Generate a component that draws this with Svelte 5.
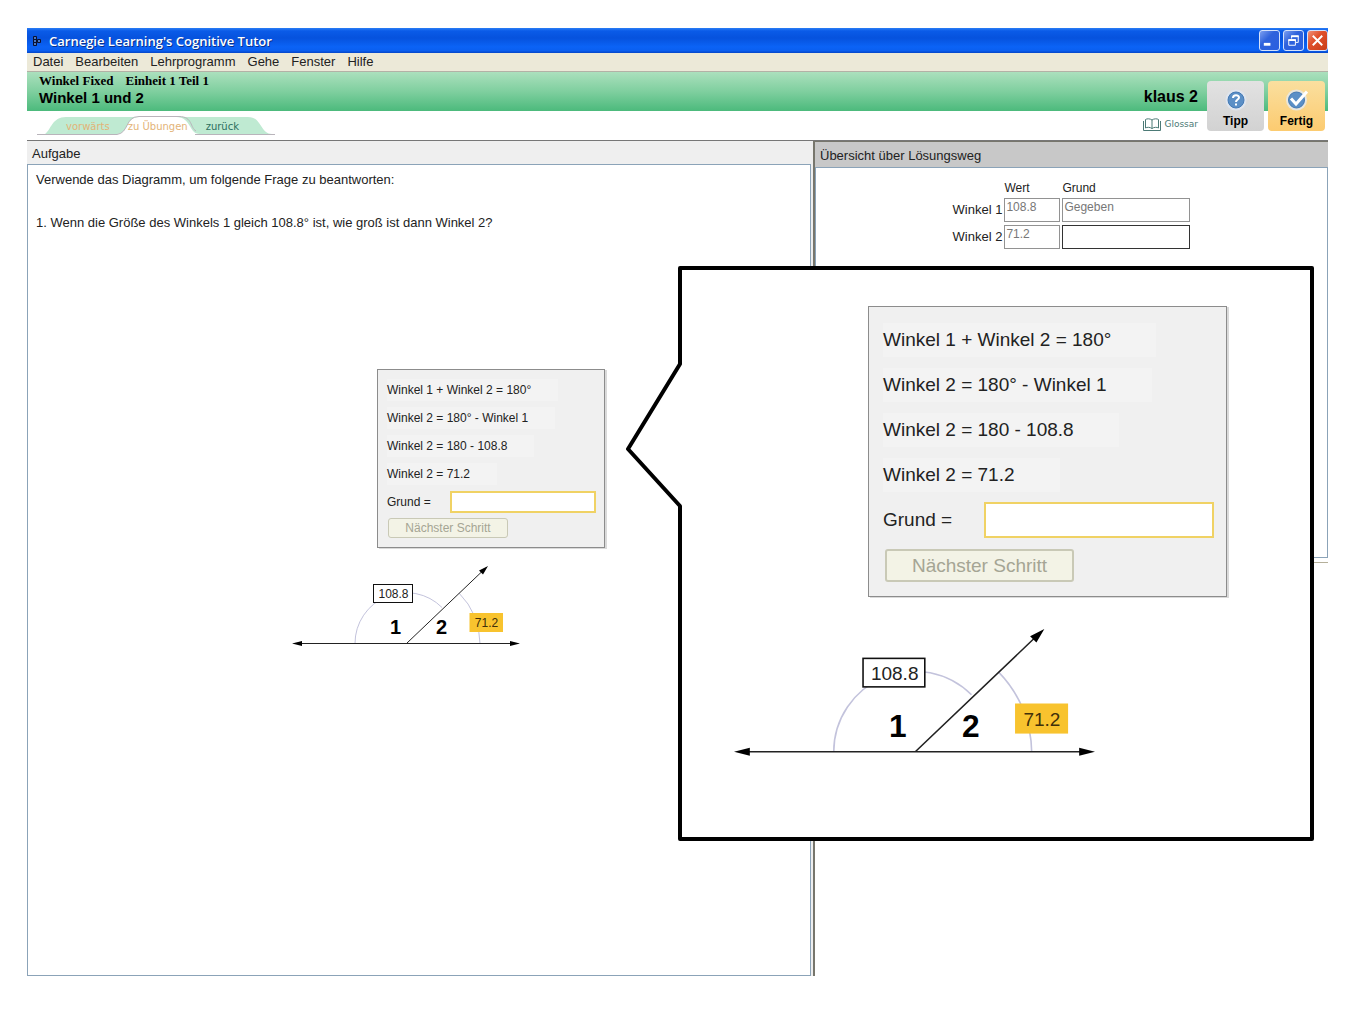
<script>
  const menus = ['Datei', 'Bearbeiten', 'Lehrprogramm', 'Gehe', 'Fenster', 'Hilfe'];
  const equations = [
    'Winkel 1 + Winkel 2 = 180°',
    'Winkel 2 = 180° - Winkel 1',
    'Winkel 2 = 180 - 108.8',
    'Winkel 2 = 71.2'
  ];
  const rows = [
    { name: 'Winkel 1', wert: '108.8', grund: 'Gegeben', open: false },
    { name: 'Winkel 2', wert: '71.2', grund: '', open: true }
  ];
</script>

{#snippet work(id)}
  <form class="steps">
    {#each equations as line}
      <p class="row"><span class="eq">{line}</span></p>
    {/each}
    <div class="row reason">
      <label for={id}>Grund =</label>
      <input {id} type="text" autocomplete="off" />
    </div>
    <button class="next" type="button" disabled>Nächster Schritt</button>
  </form>
  <svg class="diagram" viewBox="0 0 228 82" role="img" aria-label="Winkel 1 und Winkel 2">
    <g fill="none" stroke="#c3c3dc" stroke-width="1">
      <path d="M63 77.5A51 51 0 0 1 150 41.500" />
      <path d="M167 27A73.500 73.500 0 0 1 188 77.5" />
    </g>
    <path d="M8 77.5H220M114.500 77.5L190 5.500" stroke="#222" stroke-width="1" fill="none" />
    <path d="M0 77.500L10 75V80ZM228 77.500L218 75V80ZM196 0L191 8.500L187 4.500Z" fill="#000" />
    <rect x="81.500" y="18.500" width="39" height="18" fill="#fff" stroke="#111" stroke-width="1" />
    <rect x="177.500" y="47" width="33.500" height="19" fill="#f8c32e" />
    <g text-anchor="middle" font-size="12">
      <text x="101.500" y="32" fill="#222">108.8</text>
      <text x="194.500" y="61" fill="#40300a">71.2</text>
    </g>
    <g text-anchor="middle" font-size="20" font-weight="700">
      <text x="103.500" y="68">1</text>
      <text x="149.500" y="68">2</text>
    </g>
  </svg>
{/snippet}

<main class="window">
  <header class="titlebar">
    <svg class="logo" viewBox="0 0 10 12" aria-hidden="true">
      <path d="M1.500 1.500h3v3h-3zM1.500 4.500h3v3h-3zM1.500 7.500h3v3h-3zM5.500 4.500h3v3h-3z" fill="#4a78c0" stroke="#0a1030" />
    </svg>
    <h1>Carnegie Learning's Cognitive Tutor</h1>
    <div class="controls">
      <button type="button" aria-label="Minimieren">
        <svg viewBox="0 0 20 20"><path d="M4 14h7" stroke="#fff" stroke-width="3" /></svg>
      </button>
      <button type="button" aria-label="Wiederherstellen">
        <svg viewBox="0 0 20 20" fill="none" stroke="#fff">
          <path d="M8 8V5.500h7v6.500h-2.500" /><path d="M7.500 5.500H15.500" stroke-width="2" />
          <path d="M5 9.500h7v5.500h-7z" /><path d="M4.500 9.500h8" stroke-width="2" />
        </svg>
      </button>
      <button class="close" type="button" aria-label="Schließen">
        <svg viewBox="0 0 20 20"><path d="M5 5l10 10M15 5L5 15" stroke="#fff" stroke-width="2" /></svg>
      </button>
    </div>
  </header>

  <nav class="menubar" aria-label="Menü">
    {#each menus as m}<button type="button">{m}</button>{/each}
  </nav>

  <section class="banner">
    <div class="lesson">
      <p class="unit"><span>Winkel Fixed</span><span>Einheit 1 Teil 1</span></p>
      <h2>Winkel 1 und 2</h2>
      <nav class="tabs" aria-label="Navigation">
        <svg class="tabshape" viewBox="0 0 238 20" aria-hidden="true">
          <path d="M8 19C14 15 15 2 29 2H211C225 2 223 19 235 19Z" fill="#bfead2" />
          <path d="M80 19C92 18 88 2 102 2H139C155 2 151 19 163 19Z" fill="#fff" />
          <path d="M0 19.500H80C92 18 88 1.500 102 1.500H142C156 1.500 153 13 159 16" fill="none" stroke="#b9b4bb" />
          <path d="M158 19.500H238" fill="none" stroke="#b9b4bb" />
        </svg>
        <button class="dim first" type="button">vorwärts</button>
        <button class="dim second" type="button">zu Übungen</button>
        <button class="third" type="button">zurück</button>
      </nav>
    </div>
    <div class="user">
      <strong>klaus 2</strong>
      <a href="#glossar">
        <svg viewBox="0 0 18 13" fill="none" stroke="#4c7a76" aria-hidden="true">
          <path d="M9 2C7 .500 4 .500 2.500 1.500V10C4 9 7 9 9 10.500C11 9 14 9 15.500 10V1.500C14 .500 11 .500 9 2V10.500" />
          <path d="M.500 3V12.500H17.500V3" />
        </svg>
        Glossar
      </a>
    </div>
    <div class="actions">
      <button type="button">
        <svg viewBox="0 0 22 22" aria-hidden="true">
          <circle cx="11" cy="11" r="10.500" fill="#dfe5ee" />
          <circle cx="11" cy="11" r="8" fill="#5b8fc6" stroke="#447ab5" />
          <path d="M8 9C8 5.500 14 5.500 14 8.500C14 10.500 11 10.500 11 13M11 14.500V16.500" fill="none" stroke="#fff" stroke-width="2" />
        </svg>
        Tipp
      </button>
      <button class="done" type="button">
        <svg viewBox="0 0 22 22" aria-hidden="true">
          <circle cx="10.500" cy="11" r="10.500" fill="#e9e6dc" />
          <circle cx="10.500" cy="11" r="8" fill="#5b8fc6" stroke="#447ab5" />
          <path d="M5 9.500L10 15L21 2.500" fill="none" stroke="#fff" stroke-width="3" />
        </svg>
        Fertig
      </button>
    </div>
  </section>

  <div class="panes">
    <section class="task">
      <h3>Aufgabe</h3>
      <div class="body">
        <p class="question">Verwende das Diagramm, um folgende Frage zu beantworten:</p>
        <p class="question">1. Wenn die Größe des Winkels 1 gleich 108.8° ist, wie groß ist dann Winkel 2?</p>
        <div class="work">{@render work('grund')}</div>
      </div>
    </section>
    <div class="overview">
      <section>
        <h3>Übersicht über Lösungsweg</h3>
        <div class="body">
          <table>
            <thead><tr><td></td><th scope="col">Wert</th><th scope="col">Grund</th></tr></thead>
            <tbody>
              {#each rows as r}
                <tr>
                  <th scope="row">{r.name}</th>
                  <td><input class="wert" type="text" value={r.wert} aria-label="{r.name} Wert" readonly /></td>
                  <td><input class="grund" class:open={r.open} type="text" value={r.grund} aria-label="{r.name} Grund" readonly={!r.open} /></td>
                </tr>
              {/each}
            </tbody>
          </table>
        </div>
      </section>
    </div>
  </div>

  <aside class="callout" aria-label="Vergrößerung">
    <svg class="frame" viewBox="0 0 690 576" aria-hidden="true">
      <path d="M55 2H687V573H55V240L3 183L55 98Z" fill="#fff" stroke="#000" stroke-width="4" stroke-linejoin="round" />
    </svg>
    <div class="work large">{@render work('grund-gross')}</div>
  </aside>
</main>

<style>
  :global(body) { margin: 0; background: #fff; }
  * { box-sizing: border-box; }
  h1, h2, h3, p { margin: 0; font-weight: 400; }
  button { font: inherit; color: inherit; padding: 0; border: 0; background: none; }
  svg { display: block; }
  .window {
    position: relative;
    display: flex;
    flex-direction: column;
    min-height: calc(100vh - 70px);
    margin: 28px 28px 42px 27px;
    font: 13px/18px "Liberation Sans", Arial, sans-serif;
    color: #222;
  }

  .titlebar {
    display: flex;
    align-items: center;
    height: 25px;
    padding: 0 0 0 5px;
    background: linear-gradient(#2a7df5 0, #0a5be8 12%, #0652dd 40%, #0b63f6 75%, #0a5ff0 90%, #0546c8);
    color: #fff;
  }
  .logo { width: 10px; height: 12px; margin-right: 7px; }
  .titlebar h1 { flex: 1; font: 600 13px/18px "Open Sans", "Noto Sans", sans-serif; text-shadow: 1px 1px #0a318c; }
  .controls { display: flex; gap: 3px; }
  .controls button {
    width: 21px;
    height: 21px;
    border: 1px solid #d5e2fb;
    border-radius: 3px;
    background: linear-gradient(135deg, #7c9ff0, #2f62dc 40%, #2a5fe0);
  }
  .controls .close { background: linear-gradient(135deg, #f0927a, #e0502c 40%, #c83c18); }

  .menubar { display: flex; gap: 12px; height: 19px; padding: 0 6px; background: #ece9d8; border-bottom: 1px solid #b3b1a6; }

  .banner {
    display: flex;
    height: 68px;
    padding-right: 3px;
    background: linear-gradient(#abe0bd, #7fcf9f 50%, #4cba7c) top / 100% 39px no-repeat;
  }
  .lesson { flex: 1; color: #000; }
  .unit { display: flex; gap: 12px; padding-left: 12px; font: 700 13px/17px "Liberation Serif", "Times New Roman", serif; }
  .banner h2 { padding-left: 12px; font-size: 15px; font-weight: 700; }
  .tabs { position: relative; display: flex; align-items: center; width: 238px; height: 20px; margin: 8px 0 0 10px; font: 10px/12px "DejaVu Sans", sans-serif; color: #2c6f5e; }
  .tabs button { position: relative; padding-top: 4px; }
  .tabshape { position: absolute; inset: 0; width: 238px; height: 20px; }
  .dim { color: #e3b377; }
  .first { margin-left: 29px; }
  .second { margin-left: 18px; }
  .third { margin-left: 18px; }
  .user { display: flex; flex-direction: column; align-items: flex-end; gap: 11px; padding: 16px 9px 0 0; color: #000; }
  .user strong { font-size: 16px; }
  .user a { display: flex; align-items: center; gap: 3px; font: 9px/14px "DejaVu Sans", sans-serif; color: #4c7a76; text-decoration: none; }
  .user a svg { width: 18px; height: 13px; }
  .actions { display: flex; gap: 4px; padding-top: 9px; }
  .actions button {
    display: flex;
    flex-direction: column;
    align-items: center;
    gap: 1px;
    width: 57px;
    height: 50px;
    padding-top: 8px;
    border-radius: 4px;
    background: linear-gradient(#e2e2e2, #d2d2d2);
    color: #000;
    font-size: 12px;
    font-weight: 700;
  }
  .actions .done { background: linear-gradient(#fadf9f, #fccb70); }
  .actions svg { width: 22px; height: 22px; }

  .panes { display: flex; flex: 1; border-top: 1px solid #777; }
  .task { display: flex; flex: 784; flex-direction: column; min-width: 0; }
  h3 { padding: 4px 5px 2px; background: #efefef; font-size: 13px; line-height: 17px; }
  .body { flex: 1; border: 1px solid #8ba3b8; }
  .task .body { display: flex; flex-direction: column; padding: 6px 8px; }
  .question { min-height: 43px; }
  .overview { flex: 513; min-width: 0; border-left: 2px solid #77766c; box-shadow: -2px 0 #eee; margin-left: 2px; }
  .overview section { display: flex; flex-direction: column; height: calc(50% + 4px); min-height: 200px; border-bottom: 1px solid #b5b09a; padding-bottom: 4px; }
  .overview h3 { padding: 5px 5px 3px; border-top: 1px solid #77766c; background: #c8c8c8; }

  table { margin: 10px auto 0; border-spacing: 2px 3px; font-size: 12px; line-height: 14px; }
  td, th { padding: 0; font-weight: 400; text-align: left; }
  tbody th { font-size: 13px; }
  td input { display: block; height: 24px; padding: 0 0 6px 1px; border: 1px solid #929292; color: #777; font: 12px/16px "Liberation Sans", Arial, sans-serif; }
  .wert { width: 56px; }
  .grund { width: 128px; }
  .open { border-color: #333; }

  .work { display: flex; flex-direction: column; width: 312px; margin: 112px 0 0 256px; font-size: 12px; }
  .steps { width: 228px; height: 179px; margin-left: 85px; padding: 6px 8px 0 9px; border: 1px solid #8c8c8c; background: #f0f0f0; box-shadow: 2px 1px #dadada; }
  .row { display: flex; align-items: center; height: 28px; }
  .eq { padding: 2px 27px 2px 0; background: #f3f3f3; }
  .reason { justify-content: space-between; }
  .reason input { width: 146px; height: 22px; padding: 0 4px; border: 2px solid #f0d264; background: #fff; font: inherit; }
  .next { display: block; width: 120px; height: 20px; margin: 2px 0 0 1px; border: 1px solid #c9c9b6; border-radius: 3px; background: #f3f3e6; color: #a5a594; line-height: 18px; }
  .diagram { width: 228px; height: 82px; margin-top: 18px; }
  .diagram text { font-family: "Liberation Sans", Arial, sans-serif; }

  .callout { position: absolute; top: 238px; left: 598px; width: 690px; height: 576px; }
  .frame { position: absolute; inset: 0; width: 690px; height: 576px; }
  .large { position: relative; width: 500px; margin: 40px 0 0 109px; font-size: 19px; }
  .large .steps { width: 359px; height: 291px; margin-left: 134px; padding: 10px 12px 0 14px; }
  .large .row { height: 45px; }
  .large .eq { padding: 8px 45px 8px 0; }
  .large .reason input { width: 230px; height: 36px; }
  .large .next { width: 189px; height: 33px; margin: 7px 0 0 2px; border-width: 2px; line-height: 29px; }
  .large .diagram { width: 361px; height: 130px; margin-top: 32px; }
</style>
